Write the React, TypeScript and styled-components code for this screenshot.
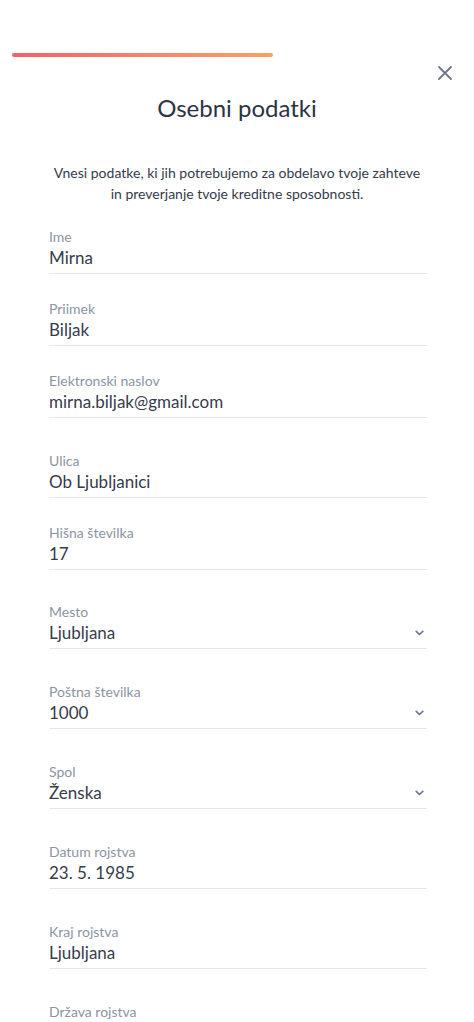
import styled, { createGlobalStyle } from 'styled-components';

const GlobalStyle = createGlobalStyle`
  body {
    margin: 0;
    background: #ffffff;
    font-family: Lato, 'Open Sans', sans-serif;
    color: #2f3545;
  }
`;

type FieldData = {
  label: string;
  value: string;
  select?: boolean;
  gap: number;
};

const fields: FieldData[] = [
  { label: 'Ime', value: 'Mirna', gap: 0 },
  { label: 'Priimek', value: 'Biljak', gap: 26 },
  { label: 'Elektronski naslov', value: 'mirna.biljak@gmail.com', gap: 26 },
  { label: 'Ulica', value: 'Ob Ljubljanici', gap: 34 },
  { label: 'Hišna številka', value: '17', gap: 26 },
  { label: 'Mesto', value: 'Ljubljana', select: true, gap: 33 },
  { label: 'Poštna številka', value: '1000', select: true, gap: 34 },
  { label: 'Spol', value: 'Ženska', select: true, gap: 34 },
  { label: 'Datum rojstva', value: '23. 5. 1985', gap: 34 },
  { label: 'Kraj rojstva', value: 'Ljubljana', gap: 34 },
  { label: 'Država rojstva', value: '', gap: 34 },
];

export default function App() {
  const progress = 58;

  return (
    <Page>
      <GlobalStyle />
      <Header>
        <Track>
          <Fill style={{ width: `${progress}%` }} />
        </Track>
        <CloseRow>
          <CloseButton aria-label="Zapri">
            <svg width="14" height="14" viewBox="0 0 14 14" fill="none">
              <path d="M1 1L13 13M13 1L1 13" stroke="#6e788b" strokeWidth="1.8" strokeLinecap="round" />
            </svg>
          </CloseButton>
        </CloseRow>
        <Title>Osebni podatki</Title>
        <Intro>
          Vnesi podatke, ki jih potrebujemo za obdelavo tvoje zahteve
          <br />
          in preverjanje tvoje kreditne sposobnosti.
        </Intro>
      </Header>

      <Form>
        {fields.map((f) => (
          <Field key={f.label} $gap={f.gap}>
            <Label>{f.label}</Label>
            <ValueRow>
              <Value>{f.value}</Value>
              {f.select && (
                <Chevron width="9" height="6" viewBox="0 0 9 6" fill="none">
                  <path d="M1.2 1.3L4.5 4.5L7.8 1.3" stroke="#6e788b" strokeWidth="1.7" strokeLinecap="round" strokeLinejoin="round" />
                </Chevron>
              )}
            </ValueRow>
          </Field>
        ))}
      </Form>
    </Page>
  );
}

const Page = styled.div`
  width: 474px;
  height: 1022px;
  overflow: hidden;
  background: #ffffff;
`;

const Header = styled.header`
  padding-top: 53px;
  display: flex;
  flex-direction: column;
`;

const Track = styled.div`
  margin: 0 12px;
  height: 4px;
  border-radius: 2px;
  background: transparent;
`;

const Fill = styled.div`
  height: 100%;
  border-radius: 2px;
  background: linear-gradient(90deg, #f2606b 0%, #f7866a 55%, #f9a25e 100%);
`;

const CloseRow = styled.div`
  display: flex;
  justify-content: flex-end;
  margin-top: 9px;
  padding-right: 22px;
`;

const CloseButton = styled.button`
  border: 0;
  padding: 0;
  background: none;
  width: 14px;
  height: 14px;
  display: flex;
  cursor: pointer;
`;

const Title = styled.h1`
  margin: 13px 0 0;
  font-size: 24px;
  line-height: 30px;
  font-weight: 400;
  text-align: center;
  color: #2c3344;
`;

const Intro = styled.p`
  margin: 39px 0 0;
  font-size: 14px;
  line-height: 21px;
  text-align: center;
  color: #343b4b;
`;

const Form = styled.form`
  display: flex;
  flex-direction: column;
  padding: 0 47px 0 49px;
  margin-top: 24px;
`;

const Field = styled.div<{ $gap: number }>`
  display: flex;
  flex-direction: column;
  margin-top: ${({ $gap }) => $gap}px;
`;

const Label = styled.label`
  font-size: 14px;
  line-height: 18px;
  color: #8b94a3;
`;

const ValueRow = styled.div`
  margin-top: 1px;
  height: 22px;
  display: flex;
  align-items: center;
  justify-content: space-between;
  padding-bottom: 4px;
  border-bottom: 1px solid #e4e7eb;
`;

const Value = styled.span`
  font-size: 17px;
  line-height: 22px;
  color: #363c4c;
`;

const Chevron = styled.svg`
  margin-right: 3px;
  flex-shrink: 0;
`;
